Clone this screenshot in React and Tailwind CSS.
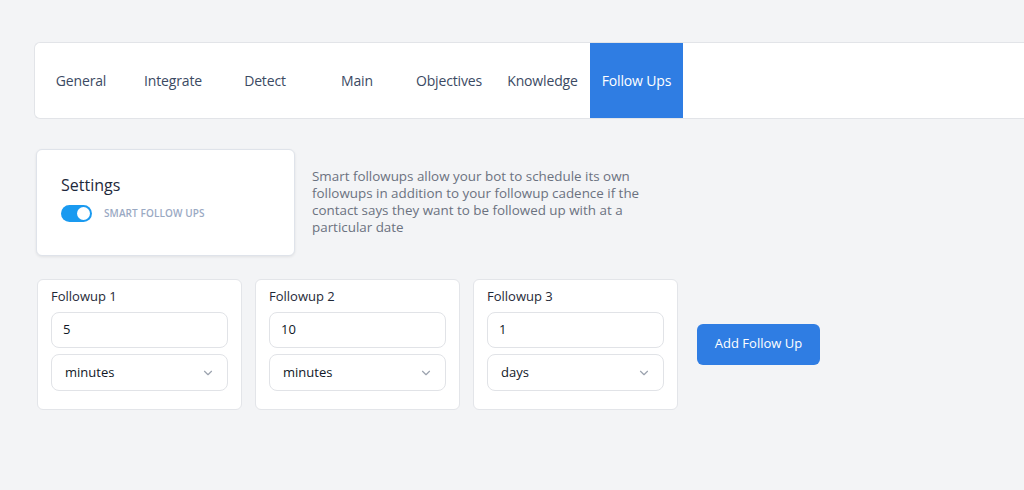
import { ChevronDown } from "lucide-react"

const tabs = [
  { name: "General", w: "w-[92px]" },
  { name: "Integrate", w: "w-[92px]" },
  { name: "Detect", w: "w-[92px]" },
  { name: "Main", w: "w-[92px]" },
  { name: "Objectives", w: "w-[92px]" },
  { name: "Knowledge", w: "w-[95px]" },
  { name: "Follow Ups", w: "w-[93px]" },
]

const followups = [
  { label: "Followup 1", value: "5", unit: "minutes" },
  { label: "Followup 2", value: "10", unit: "minutes" },
  { label: "Followup 3", value: "1", unit: "days" },
]

function FollowupCard({ label, value, unit }) {
  return (
    <div className="w-[205px] h-[131px] bg-white border border-[#e3e5e9] rounded-md px-[13px] pt-[7px]">
      <div className="text-[13px] text-[#1f2937] leading-[18px]">{label}</div>
      <div className="mt-[7px] h-[36px] border border-[#e1e3e7] rounded-lg flex items-center px-[11px] text-[13px] text-[#111827]">
        {value}
      </div>
      <div className="mt-[6px] h-[37px] border border-[#e1e3e7] rounded-lg flex items-center justify-between pl-[13px] pr-[12px] text-[13px] text-[#111827]">
        <span>{unit}</span>
        <ChevronDown className="w-[14px] h-[14px] text-[#9ca3af]" strokeWidth={2} />
      </div>
    </div>
  )
}

export default function App() {
  return (
    <div className="min-h-[490px] bg-[#f3f4f6] pt-[42px] pl-[34px] font-['Open_Sans',sans-serif]">
      <div className="h-[77px] bg-white border border-r-0 border-[#e2e4e8] rounded-l-md flex">
        {tabs.map((t) => (
          <div
            key={t.name}
            className={
              t.name === "Follow Ups"
                ? `${t.w} flex items-center justify-center whitespace-nowrap text-[14px] tracking-[-0.01em] bg-[#2f7de3] text-white`
                : `${t.w} flex items-center justify-center whitespace-nowrap text-[14px] tracking-[-0.01em] text-[#3b4a63]`
            }
          >
            {t.name}
          </div>
        ))}
      </div>

      <div className="mt-[30px] flex items-start">
        <div className="ml-[2px] w-[259px] h-[107px] bg-white border border-[#dfe3ea] rounded-md shadow-[0_1px_3px_rgba(0,0,0,0.08)] pl-[24px] pt-[24px]">
          <div className="text-[16px] text-[#1e293b] leading-[22px]">Settings</div>
          <div className="mt-[9px] flex items-center">
            <div className="w-[31px] h-[17px] rounded-full bg-[#1a9af0] flex items-center justify-end pr-[2px]">
              <div className="w-[13px] h-[13px] rounded-full bg-white" />
            </div>
            <span className="ml-[12px] text-[10px] font-semibold text-[#9aa9c3] tracking-[0.01em]">SMART FOLLOW UPS</span>
          </div>
        </div>
        <p className="ml-[17px] mt-[19px] w-[345px] text-[13.4px] leading-[17px] text-[#6b7280]">
          Smart followups allow your bot to schedule its own followups in addition to your followup cadence if the
          contact says they want to be followed up with at a particular date
        </p>
      </div>

      <div className="mt-[23px] ml-[3px] flex items-center gap-[13px]">
        {followups.map((f) => (
          <FollowupCard key={f.label} {...f} />
        ))}
        <button className="ml-[6px] -mt-[1px] w-[123px] h-[41px] rounded-md bg-[#2f7de3] text-white text-[13px]">
          Add Follow Up
        </button>
      </div>
    </div>
  )
}
